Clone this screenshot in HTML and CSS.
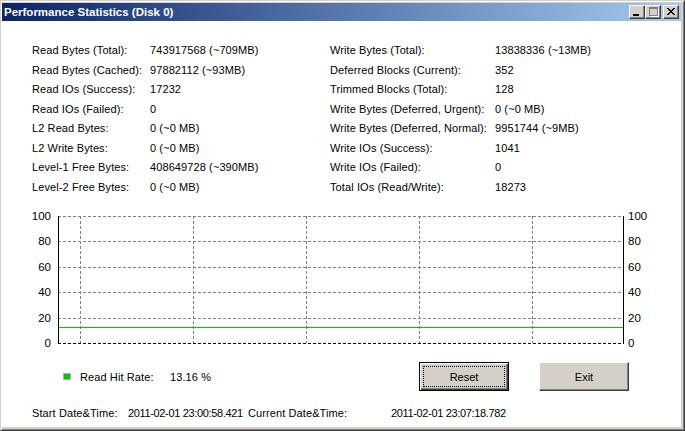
FILE: index.html
```html
<!DOCTYPE html>
<html>
<head>
<meta charset="utf-8">
<title>Performance Statistics (Disk 0)</title>
<link rel="stylesheet" href="styles.css">
</head>
<body>
<div class="window">
  <div class="frame">
    <div class="inner">
      <div class="titlebar">
        <span class="title">Performance Statistics (Disk 0)</span>
        <div class="caption-buttons">
          <span class="cbtn"><svg width="14" height="12" viewBox="0 0 14 12"><rect x="3" y="8" width="6" height="2" fill="#000"/></svg></span>
          <span class="cbtn"><svg width="14" height="12" viewBox="0 0 14 12"><rect x="3.5" y="1.5" width="8" height="8" fill="none" stroke="#808080"/><rect x="3" y="2" width="9" height="1" fill="#808080"/><path d="M12.5 2.5 V10.5 H4.5" fill="none" stroke="#fff"/></svg></span>
          <span class="cbtn close"><svg width="14" height="12" viewBox="0 0 14 12"><path d="M3 2 L10 9 M4 2 L11 9 M10 2 L3 9 M11 2 L4 9" stroke="#000" stroke-width="1"/></svg></span>
        </div>
      </div>
      <div class="client">
        <div class="stats">
          <span>Read Bytes (Total):</span><span>743917568 (~709MB)</span><span>Write Bytes (Total):</span><span>13838336 (~13MB)</span>
          <span>Read Bytes (Cached):</span><span>97882112 (~93MB)</span><span>Deferred Blocks (Current):</span><span>352</span>
          <span>Read IOs (Success):</span><span>17232</span><span>Trimmed Blocks (Total):</span><span>128</span>
          <span>Read IOs (Failed):</span><span>0</span><span>Write Bytes (Deferred, Urgent):</span><span>0 (~0 MB)</span>
          <span>L2 Read Bytes:</span><span>0 (~0 MB)</span><span>Write Bytes (Deferred, Normal):</span><span>9951744 (~9MB)</span>
          <span>L2 Write Bytes:</span><span>0 (~0 MB)</span><span>Write IOs (Success):</span><span>1041</span>
          <span>Level-1 Free Bytes:</span><span>408649728 (~390MB)</span><span>Write IOs (Failed):</span><span>0</span>
          <span>Level-2 Free Bytes:</span><span>0 (~0 MB)</span><span>Total IOs (Read/Write):</span><span>18273</span>
        </div>
        <svg class="chart" width="679" height="155" viewBox="0 0 679 155">
          <g stroke="#808080" stroke-dasharray="3 2" fill="none">
            <path d="M56 16.5 H621 M56 41.5 H621 M56 67.5 H621 M56 92.5 H621 M56 118.5 H621"/>
            <path d="M78.5 16 V143 M191.5 16 V143 M304.5 16 V143 M417.5 16 V143 M530.5 16 V143"/>
          </g>
          <path d="M56 143.5 H621" stroke="#000" stroke-dasharray="3 2" fill="none"/>
          <path d="M56.5 16 V144 M621.5 16 V144" stroke="#000" fill="none"/>
          <path d="M57 127.5 H621" stroke="#00c800" fill="none"/>
          <g class="axis" text-anchor="end">
            <text x="49" y="20">100</text>
            <text x="49" y="45">80</text>
            <text x="49" y="71">60</text>
            <text x="49" y="96">40</text>
            <text x="49" y="122">20</text>
            <text x="49" y="147">0</text>
          </g>
          <g class="axis">
            <text x="626" y="20">100</text>
            <text x="626" y="45">80</text>
            <text x="626" y="71">60</text>
            <text x="626" y="96">40</text>
            <text x="626" y="122">20</text>
            <text x="626" y="147">0</text>
          </g>
        </svg>
        <div class="controls">
          <div class="legend">
            <span class="swatch"></span>
            <span class="legend-label">Read Hit Rate:</span>
            <span>13.16 %</span>
          </div>
          <button class="btn default"><span class="focus">Reset</span></button>
          <button class="btn">Exit</button>
        </div>
        <div class="footer">
          <span class="f1">Start Date&amp;Time:</span>
          <span class="f2 val">2011-02-01 23:00:58.421</span>
          <span class="f3">Current Date&amp;Time:</span>
          <span class="val">2011-02-01 23:07:18.782</span>
        </div>
      </div>
    </div>
  </div>
</div>
</body>
</html>
```
FILE: styles.css
```css
* { box-sizing: border-box; }
html, body { margin: 0; padding: 0; background: #fff; }
body {
  font-family: "Liberation Sans", Arial, sans-serif;
  font-size: 11px;
  color: #000;
}
.window {
  width: 685px;
  height: 431px;
  border: 1px solid;
  border-color: #d4d0c8 #404040 #404040 #d4d0c8;
}
.frame {
  height: 100%;
  border: 1px solid;
  border-color: #fff #808080 #808080 #fff;
}
.inner {
  height: 100%;
  background: #d4d0c8;
  padding: 1px 2px 2px 0;
  display: flex;
  flex-direction: column;
}
.titlebar {
  height: 18px;
  flex: none;
  background: linear-gradient(to right, #0a246a, #a6caf0);
  display: flex;
  align-items: center;
  padding-left: 2px;
  padding-right: 2px;
}
.title {
  color: #fff;
  font-weight: bold;
  font-size: 11.5px;
  flex: 1;
  white-space: nowrap;
}
.caption-buttons {
  display: flex;
  align-items: center;
}
.cbtn {
  width: 16px;
  height: 14px;
  background: #d4d0c8;
  border: 1px solid;
  border-color: #fff #404040 #404040 #fff;
  box-shadow: inset -1px -1px #808080;
  display: flex;
}
.cbtn svg { display: block; }
.cbtn.close { margin-left: 2px; }
.client {
  flex: 1;
  background: #fff;
  display: flex;
  flex-direction: column;
}
.stats {
  display: grid;
  grid-template-columns: 118px 180px 165px 1fr;
  grid-auto-rows: 19.5px;
  line-height: 19.5px;
  padding: 20px 0 0 30px;
  letter-spacing: 0.1px;
  white-space: nowrap;
}
.chart {
  display: block;
  margin-top: 3px;
  flex: none;
}
.axis text {
  font-family: "Liberation Sans", Arial, sans-serif;
  font-size: 11.5px;
  fill: #000;
}
.controls {
  display: flex;
  align-items: center;
  margin-top: 7px;
  height: 29px;
  padding-left: 61px;
}
.legend {
  width: 356px;
  display: flex;
  align-items: center;
  letter-spacing: 0.1px;
}
.swatch {
  width: 8px;
  height: 7px;
  background: #00c800;
  border: 1px solid #b0b0b0;
  margin-right: 9px;
}
.legend-label { width: 90px; }
.btn {
  width: 90px;
  height: 29px;
  padding: 0;
  margin: 0 30px 0 0;
  font-family: "Liberation Sans", Arial, sans-serif;
  font-size: 11px;
  color: #000;
  background: #d4d0c8;
  border: 1px solid;
  border-color: #fff #404040 #404040 #fff;
  box-shadow: inset -1px -1px #808080;
  display: flex;
  align-items: center;
  justify-content: center;
}
.btn.default {
  border-color: #000;
  box-shadow: inset 1px 1px #fff, inset -1px -1px #404040, inset -2px -2px #808080;
  padding: 3px;
}
.focus {
  flex: 1;
  align-self: stretch;
  border: 1px dotted #000;
  display: flex;
  align-items: center;
  justify-content: center;
}
.footer {
  margin-top: 15px;
  line-height: 14px;
  padding-left: 30px;
  display: flex;
  letter-spacing: 0.1px;
  white-space: nowrap;
}
.footer .val { letter-spacing: -0.35px; }
.f1 { width: 96px; }
.f2 { width: 120px; }
.f3 { width: 143px; }
```
